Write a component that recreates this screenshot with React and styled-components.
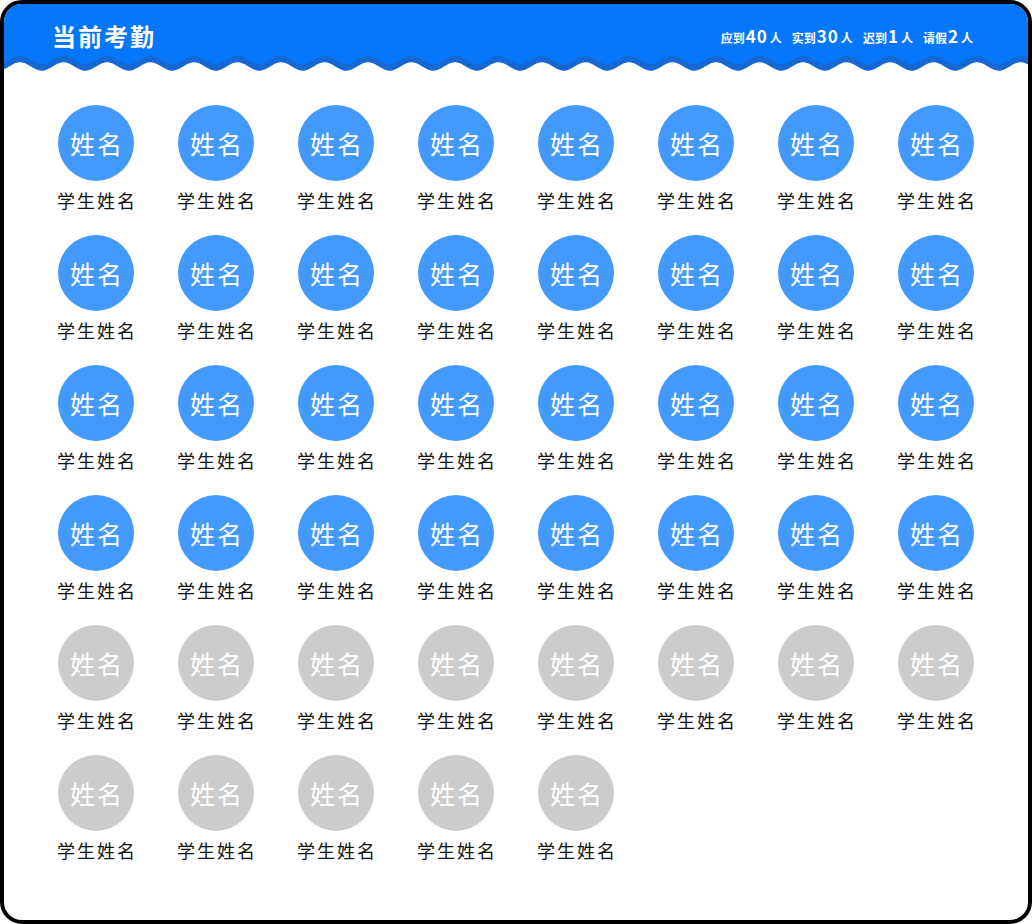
import React from "react";
import styled, { createGlobalStyle } from "styled-components";

const GlobalStyle = createGlobalStyle`
  html, body { margin: 0; padding: 0; background: #ffffff; }
  body { font-family: "Noto Sans CJK SC", "Noto Sans", sans-serif; }
  * { box-sizing: border-box; }
`;

const Frame = styled.div`
  width: 1032px;
  height: 924px;
  border: 4px solid #000;
  border-radius: 22px;
  overflow: hidden;
  background: #fff;
  display: flex;
  flex-direction: column;
`;

const Header = styled.header`
  display: flex;
  flex-direction: column;
`;

const TitleBar = styled.div`
  height: 49px;
  background: #0676fa;
  display: flex;
  align-items: center;
  justify-content: space-between;
  padding: 0 55px 0 48px;
`;

const Title = styled.h1`
  margin: 0;
  color: #fff;
  font-size: 24px;
  font-weight: 700;
  letter-spacing: 2px;
  line-height: 1;
  padding-top: 14px;
`;

const Stats = styled.div`
  display: flex;
  align-items: baseline;
  gap: 10px;
  color: #fff;
  font-weight: 700;
  padding-top: 14px;
`;

const Stat = styled.span`
  font-size: 12px;
  display: inline-flex;
  align-items: baseline;
`;

const Num = styled.span`
  font-size: 17px;
  letter-spacing: 1px;
  margin: 0 2px 0 1px;
`;

const WaveSvg = styled.svg`
  display: block;
  width: 1024px;
  height: 20px;
`;

function Wave() {
  const W = 1024;
  const P = 43.5;
  const x0 = 16;
  const pts = [];
  for (let x = 0; x <= W; x += 1) {
    const y = 13.5 - 4.2 * Math.cos((2 * Math.PI * (x - x0)) / P);
    pts.push([x, y]);
  }
  const curve = (dy) =>
    pts.map(([x, y], i) => `${i === 0 ? "M" : "L"}${x} ${(y + dy).toFixed(2)}`).join(" ");
  const dark = `${curve(-6.5)} L${W} 20 L0 20 Z`;
  const white = `${curve(0)} L${W} 20 L0 20 Z`;
  return (
    <WaveSvg viewBox={`0 0 ${W} 20`} preserveAspectRatio="none">
      <rect x="0" y="0" width={W} height="20" fill="#0676fa" />
      <path d={dark} fill="#1568d4" />
      <path d={white} fill="#ffffff" />
    </WaveSvg>
  );
}

const Grid = styled.div`
  display: grid;
  grid-template-columns: repeat(8, 120px);
  row-gap: 22px;
  padding: 32px 32px 0 32px;
`;

const Cell = styled.div`
  display: flex;
  flex-direction: column;
  align-items: center;
`;

const Avatar = styled.div`
  width: 76px;
  height: 76px;
  border-radius: 50%;
  background: ${(p) => (p.$absent ? "#cccccc" : "#4499fc")};
  color: #fff;
  display: flex;
  align-items: center;
  justify-content: center;
  font-size: 25px;
  letter-spacing: 2px;
  padding-left: 2px;
  line-height: 1;
`;

const Name = styled.div`
  margin-top: 6px;
  height: 26px;
  line-height: 26px;
  font-size: 18px;
  letter-spacing: 2px;
  padding-left: 2px;
  color: #111;
`;

const students = Array.from({ length: 45 }, (_, i) => ({
  id: i,
  absent: i >= 32,
}));

export default function App() {
  return (
    <>
      <GlobalStyle />
      <Frame>
        <Header>
          <TitleBar>
            <Title>当前考勤</Title>
            <Stats>
              <Stat>应到<Num>40</Num>人</Stat>
              <Stat>实到<Num>30</Num>人</Stat>
              <Stat>迟到<Num>1</Num>人</Stat>
              <Stat>请假<Num>2</Num>人</Stat>
            </Stats>
          </TitleBar>
          <Wave />
        </Header>
        <Grid>
          {students.map((s) => (
            <Cell key={s.id}>
              <Avatar $absent={s.absent}>姓名</Avatar>
              <Name>学生姓名</Name>
            </Cell>
          ))}
        </Grid>
      </Frame>
    </>
  );
}
